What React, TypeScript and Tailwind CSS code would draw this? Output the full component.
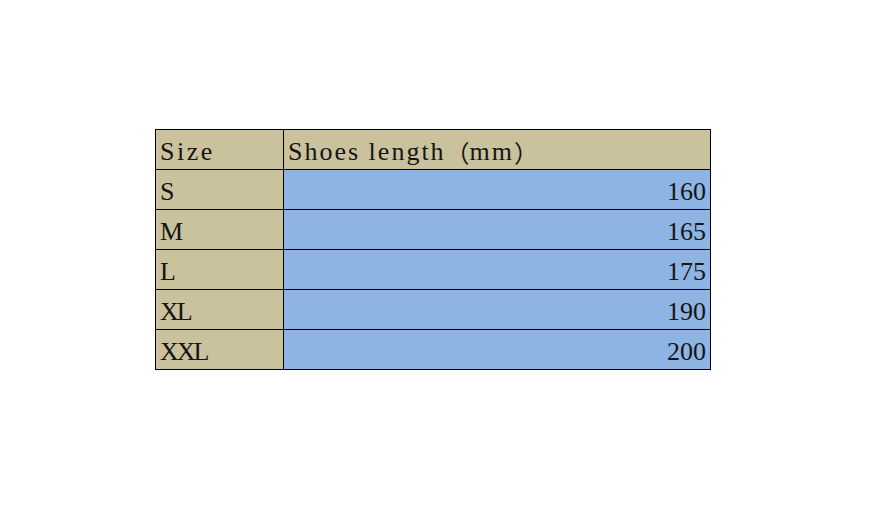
import React from "react";

const rows = [
  { s: "S", v: "160", t: "tracking-[0px]" },
  { s: "M", v: "165", t: "tracking-[0px]" },
  { s: "L", v: "175", t: "tracking-[0px]" },
  { s: "XL", v: "190", t: "tracking-[-2px]" },
  { s: "XXL", v: "200", t: "tracking-[-2px]" },
];

const cjk = { fontFamily: '"Noto Sans CJK SC", sans-serif' };

export default function App() {
  return (
    <div className="w-[889px] h-[520px] bg-white pt-[129px] pl-[155px]" style={{ fontFamily: '"Liberation Serif", "Noto Sans CJK SC", serif' }}>
      <div className="w-[556px] border-l border-t border-black text-[26px] leading-[26px] text-[#151515]">
        <div className="flex">
          <div className="w-[128px] h-[40px] border-r border-b border-black bg-[#c9c29c] flex items-end pl-[4px] pb-[4px] tracking-[2.5px]">Size</div>
          <div className="w-[427px] h-[40px] border-r border-b border-black bg-[#c9c29c] flex items-end pl-[4px] pb-[4px] tracking-[2px]">
            Shoes length<span className="tracking-normal text-[24px]" style={cjk}>（</span>mm<span className="tracking-normal text-[24px]" style={cjk}>）</span>
          </div>
        </div>
        {rows.map((r) => (
          <div className="flex" key={r.s}>
            <div className={`w-[128px] h-[40px] border-r border-b border-black bg-[#c9c29c] flex items-end pl-[4px] pb-[4px] ${r.t}`}>{r.s}</div>
            <div className="w-[427px] h-[40px] border-r border-b border-black bg-[#8eb4e3] flex items-end justify-end pr-[4px] pb-[4px]">{r.v}</div>
          </div>
        ))}
      </div>
    </div>
  );
}
